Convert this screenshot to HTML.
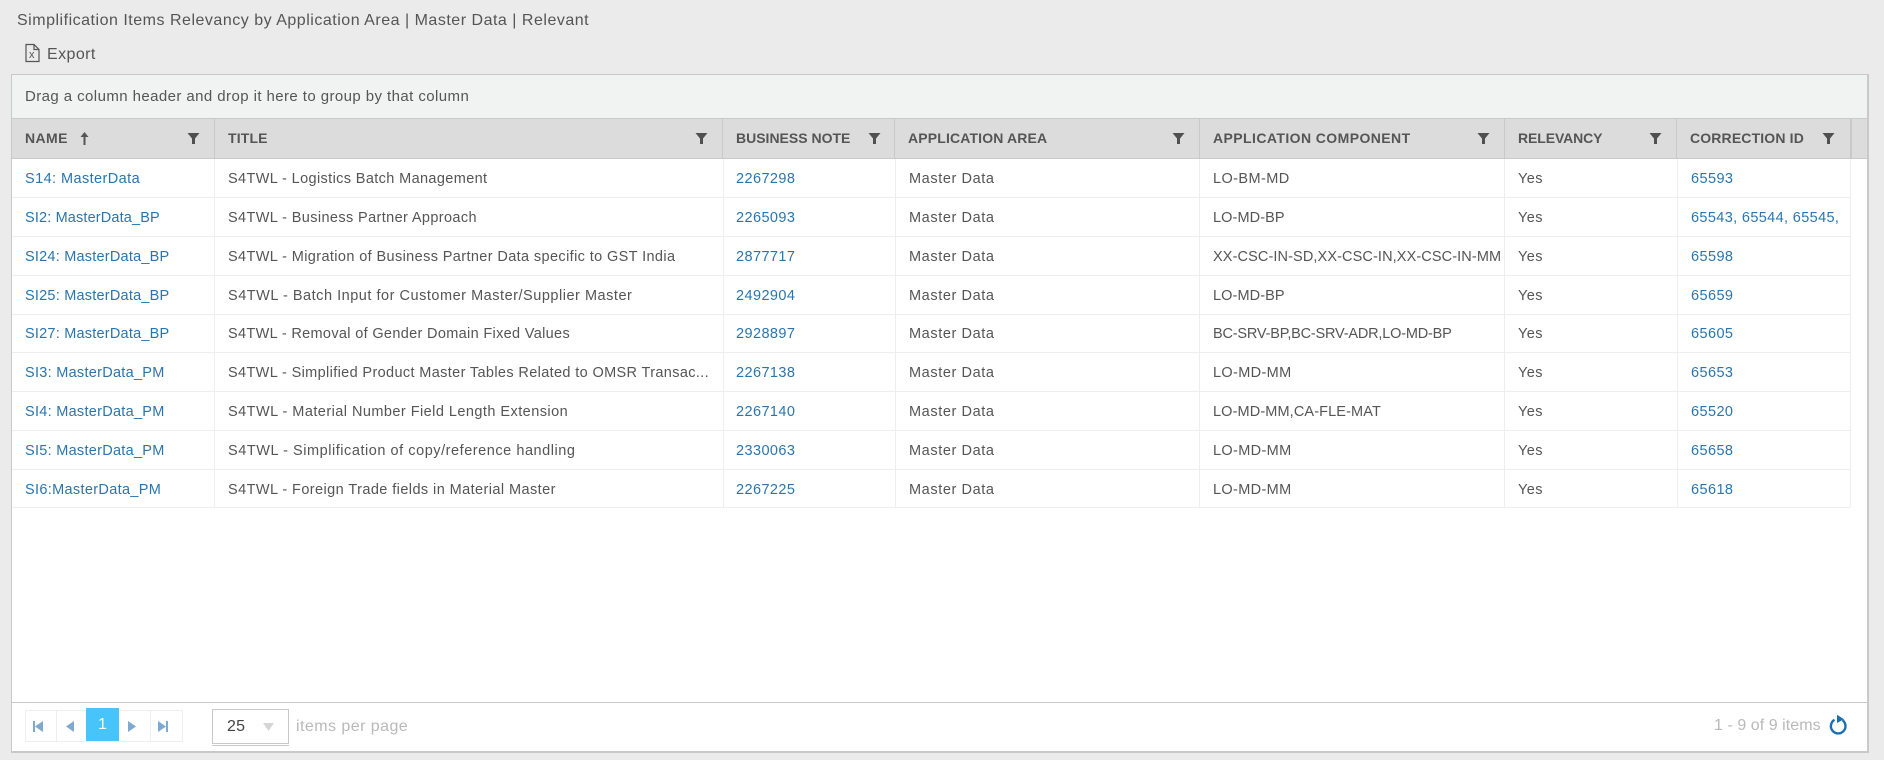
<!DOCTYPE html>
<html><head><meta charset="utf-8">
<style>
html,body{margin:0;padding:0;width:1884px;height:760px;overflow:hidden;background:#ebebeb;}
body{font-family:"Liberation Sans",sans-serif;font-size:14.5px;letter-spacing:.42px;color:#555;position:relative;}
.a{position:absolute;white-space:nowrap;}
#panel{position:absolute;left:11px;top:74px;width:1858px;height:679px;background:#fff;border:1px solid #c9c9c9;border-right:2px solid #c9c9c9;border-bottom:2px solid #c9c9c9;box-sizing:border-box;}
#grp{position:absolute;left:12px;top:75px;width:1855px;height:44px;background:#f1f3f3;border-bottom:1px solid #c9c9c9;box-sizing:border-box;}
#hd{position:absolute;left:12px;top:119px;width:1855px;height:40px;background:#dcdcdc;border-bottom:1px solid #c9c9c9;box-sizing:border-box;}
.hs{position:absolute;top:119px;height:40px;width:1px;background:#c9c9c9;}
.h{position:absolute;top:130px;font-weight:bold;font-size:14px;letter-spacing:.15px;color:#555;white-space:nowrap;}
.f{position:absolute;top:132px;width:13px;height:13px;}
.v{position:absolute;top:159px;height:348px;width:1px;background:#eee;}
.r{position:absolute;left:12px;width:1838px;height:1px;background:#eee;}
.c{position:absolute;white-space:nowrap;line-height:20px;}
.l{color:#2a75ae;}
</style></head>
<body>
<div class="a" style="left:17px;top:11px;line-height:20px;font-size:16px;letter-spacing:.51px;color:#555;">Simplification Items Relevancy by Application Area | Master Data | Relevant</div>
<svg class="a" style="left:24px;top:43px" width="17" height="20" viewBox="0 0 17 20"><path d="M2 1.500h8l5 5v12H2z M10 1.500v5h5" fill="none" stroke="#555" stroke-width="1.200"/><text x="5" y="15" font-size="11" font-family="Liberation Sans" fill="#555">x</text></svg>
<div class="a" style="left:47px;top:45px;line-height:20px;font-size:16px;">Export</div>

<div id="panel"></div>
<div id="grp"></div>
<div class="a" style="left:25px;top:87px;line-height:20px;font-size:15px;letter-spacing:.42px;">Drag a column header and drop it here to group by that column</div>
<div id="hd"></div>
<div class="hs" style="left:214px"></div><div class="hs" style="left:722px"></div><div class="hs" style="left:894px"></div><div class="hs" style="left:1199px"></div><div class="hs" style="left:1504px"></div><div class="hs" style="left:1676px"></div><div class="hs" style="left:1850px;width:2px"></div>

<div class="h" style="left:25px;letter-spacing:.4px">NAME</div>
<svg class="a" style="left:79px;top:131px" width="11" height="15" viewBox="0 0 11 15"><path d="M5.500 1L1.500 6h3v8h2V6h3z" fill="#555"/></svg>
<div class="h" style="left:228px">TITLE</div>
<div class="h" style="left:736px;letter-spacing:0">BUSINESS NOTE</div>
<div class="h" style="left:908px">APPLICATION AREA</div>
<div class="h" style="left:1213px;letter-spacing:.42px">APPLICATION COMPONENT</div>
<div class="h" style="left:1518px;letter-spacing:-.1px">RELEVANCY</div>
<div class="h" style="left:1690px">CORRECTION ID</div>
<svg class="f" style="left:187px" viewBox="0 0 13 13"><path d="M.5 1h12L8 6.500V12H5V6.500z" fill="#505050"/></svg>
<svg class="f" style="left:695px" viewBox="0 0 13 13"><path d="M.5 1h12L8 6.500V12H5V6.500z" fill="#505050"/></svg>
<svg class="f" style="left:868px" viewBox="0 0 13 13"><path d="M.5 1h12L8 6.500V12H5V6.500z" fill="#505050"/></svg>
<svg class="f" style="left:1172px" viewBox="0 0 13 13"><path d="M.5 1h12L8 6.500V12H5V6.500z" fill="#505050"/></svg>
<svg class="f" style="left:1477px" viewBox="0 0 13 13"><path d="M.5 1h12L8 6.500V12H5V6.500z" fill="#505050"/></svg>
<svg class="f" style="left:1649px" viewBox="0 0 13 13"><path d="M.5 1h12L8 6.500V12H5V6.500z" fill="#505050"/></svg>
<svg class="f" style="left:1822px" viewBox="0 0 13 13"><path d="M.5 1h12L8 6.500V12H5V6.500z" fill="#505050"/></svg>

<div class="v" style="left:214px"></div><div class="v" style="left:723px"></div><div class="v" style="left:895px"></div><div class="v" style="left:1199px"></div><div class="v" style="left:1504px"></div><div class="v" style="left:1677px"></div><div class="v" style="left:1850px"></div>
<div class="r" style="top:197px"></div><div class="r" style="top:236px"></div><div class="r" style="top:275px"></div><div class="r" style="top:314px"></div><div class="r" style="top:352px"></div><div class="r" style="top:391px"></div><div class="r" style="top:430px"></div><div class="r" style="top:469px"></div><div class="r" style="top:507px"></div>

<div class="c l" style="left:25px;top:169px">S14: MasterData</div><div class="c" style="left:228px;top:169px;letter-spacing:.37px">S4TWL - Logistics Batch Management</div><div class="c l" style="left:736px;top:169px">2267298</div><div class="c" style="left:909px;top:169px;letter-spacing:.6px">Master Data</div><div class="c" style="left:1213px;top:169px">LO-BM-MD</div><div class="c" style="left:1518px;top:169px">Yes</div><div class="c l" style="left:1691px;top:169px">65593</div>
<div class="c l" style="left:25px;top:208px;letter-spacing:.15px">SI2: MasterData_BP</div><div class="c" style="left:228px;top:208px;letter-spacing:.38px">S4TWL - Business Partner Approach</div><div class="c l" style="left:736px;top:208px">2265093</div><div class="c" style="left:909px;top:208px;letter-spacing:.6px">Master Data</div><div class="c" style="left:1213px;top:208px;letter-spacing:.1px">LO-MD-BP</div><div class="c" style="left:1518px;top:208px">Yes</div><div class="c l" style="left:1691px;top:208px;letter-spacing:.36px">65543, 65544, 65545,</div>
<div class="c l" style="left:25px;top:247px;letter-spacing:.22px">SI24: MasterData_BP</div><div class="c" style="left:228px;top:247px;letter-spacing:.38px">S4TWL - Migration of Business Partner Data specific to GST India</div><div class="c l" style="left:736px;top:247px">2877717</div><div class="c" style="left:909px;top:247px;letter-spacing:.6px">Master Data</div><div class="c" style="left:1213px;top:247px;letter-spacing:.11px">XX-CSC-IN-SD,XX-CSC-IN,XX-CSC-IN-MM</div><div class="c" style="left:1518px;top:247px">Yes</div><div class="c l" style="left:1691px;top:247px">65598</div>
<div class="c l" style="left:25px;top:286px;letter-spacing:.22px">SI25: MasterData_BP</div><div class="c" style="left:228px;top:286px;letter-spacing:.52px">S4TWL - Batch Input for Customer Master/Supplier Master</div><div class="c l" style="left:736px;top:286px">2492904</div><div class="c" style="left:909px;top:286px;letter-spacing:.6px">Master Data</div><div class="c" style="left:1213px;top:286px;letter-spacing:.1px">LO-MD-BP</div><div class="c" style="left:1518px;top:286px">Yes</div><div class="c l" style="left:1691px;top:286px">65659</div>
<div class="c l" style="left:25px;top:324px;letter-spacing:.22px">SI27: MasterData_BP</div><div class="c" style="left:228px;top:324px;letter-spacing:.33px">S4TWL - Removal of Gender Domain Fixed Values</div><div class="c l" style="left:736px;top:324px">2928897</div><div class="c" style="left:909px;top:324px;letter-spacing:.6px">Master Data</div><div class="c" style="left:1213px;top:324px;letter-spacing:-.19px">BC-SRV-BP,BC-SRV-ADR,LO-MD-BP</div><div class="c" style="left:1518px;top:324px">Yes</div><div class="c l" style="left:1691px;top:324px">65605</div>
<div class="c l" style="left:25px;top:363px;letter-spacing:.28px">SI3: MasterData_PM</div><div class="c" style="left:228px;top:363px;letter-spacing:.36px">S4TWL - Simplified Product Master Tables Related to OMSR Transac...</div><div class="c l" style="left:736px;top:363px">2267138</div><div class="c" style="left:909px;top:363px;letter-spacing:.6px">Master Data</div><div class="c" style="left:1213px;top:363px;letter-spacing:.35px">LO-MD-MM</div><div class="c" style="left:1518px;top:363px">Yes</div><div class="c l" style="left:1691px;top:363px">65653</div>
<div class="c l" style="left:25px;top:402px;letter-spacing:.28px">SI4: MasterData_PM</div><div class="c" style="left:228px;top:402px;letter-spacing:.45px">S4TWL - Material Number Field Length Extension</div><div class="c l" style="left:736px;top:402px">2267140</div><div class="c" style="left:909px;top:402px;letter-spacing:.6px">Master Data</div><div class="c" style="left:1213px;top:402px;letter-spacing:.12px">LO-MD-MM,CA-FLE-MAT</div><div class="c" style="left:1518px;top:402px">Yes</div><div class="c l" style="left:1691px;top:402px">65520</div>
<div class="c l" style="left:25px;top:441px;letter-spacing:.28px">SI5: MasterData_PM</div><div class="c" style="left:228px;top:441px;letter-spacing:.54px">S4TWL - Simplification of copy/reference handling</div><div class="c l" style="left:736px;top:441px">2330063</div><div class="c" style="left:909px;top:441px;letter-spacing:.6px">Master Data</div><div class="c" style="left:1213px;top:441px;letter-spacing:.35px">LO-MD-MM</div><div class="c" style="left:1518px;top:441px">Yes</div><div class="c l" style="left:1691px;top:441px">65658</div>
<div class="c l" style="left:25px;top:480px;letter-spacing:.33px">SI6:MasterData_PM</div><div class="c" style="left:228px;top:480px">S4TWL - Foreign Trade fields in Material Master</div><div class="c l" style="left:736px;top:480px">2267225</div><div class="c" style="left:909px;top:480px;letter-spacing:.6px">Master Data</div><div class="c" style="left:1213px;top:480px;letter-spacing:.35px">LO-MD-MM</div><div class="c" style="left:1518px;top:480px">Yes</div><div class="c l" style="left:1691px;top:480px">65618</div>

<div class="a" style="left:12px;top:702px;width:1855px;height:1px;background:#c9c9c9"></div>
<div class="a" style="left:25px;top:710px;width:156px;height:30px;border:1px solid #eee"></div>
<div class="a" style="left:56px;top:711px;width:1px;height:30px;background:#eee"></div>
<div class="a" style="left:150px;top:711px;width:1px;height:30px;background:#eee"></div>
<div class="a" style="left:86px;top:708px;width:33px;height:33px;background:#47c4f9;color:#fff;text-align:center;line-height:33px;font-size:16px;letter-spacing:0">1</div>
<svg class="a" style="left:25px;top:710px" width="160" height="32" viewBox="0 0 160 32">
<path d="M8 11h2v11H8zM18 11v11l-8-5.500zM49 11v11l-8-5.500z" fill="#7eaad2"/>
<path d="M103 11v11l8-5.500zM133 11v11l8-5.500zM141 11h2v11h-2z" fill="#7eaad2"/></svg>
<div class="a" style="left:212px;top:709px;width:75px;height:33px;border:1px solid #c9c9c9;"></div>
<div class="a" style="left:212px;top:745px;width:77px;height:1px;background:#c9c9c9;"></div>
<div class="a" style="left:227px;top:717px;line-height:20px;font-size:16px;letter-spacing:.2px;color:#444;">25</div>
<svg class="a" style="left:263px;top:723px" width="11" height="8" viewBox="0 0 11 8"><path d="M0 0h11L5.500 8z" fill="#d6d6d6"/></svg>
<div class="a" style="left:296px;top:717px;line-height:20px;font-size:16px;letter-spacing:.45px;color:#b9b9b9;">items per page</div>
<div class="a" style="left:1714px;top:716px;line-height:20px;font-size:16px;letter-spacing:.05px;color:#b9b9b9;">1 - 9 of 9 items</div>
<svg class="a" style="left:1829px;top:714px" width="20" height="22" viewBox="0 0 20 22"><path d="M13.500 6.200A7.300 7.300 0 1 1 5.500 5.800" fill="none" stroke="#1c6fb0" stroke-width="2.400"/><path d="M8 .8l7 4.500-7 3.700z" fill="#1c6fb0"/></svg>
</body></html>
